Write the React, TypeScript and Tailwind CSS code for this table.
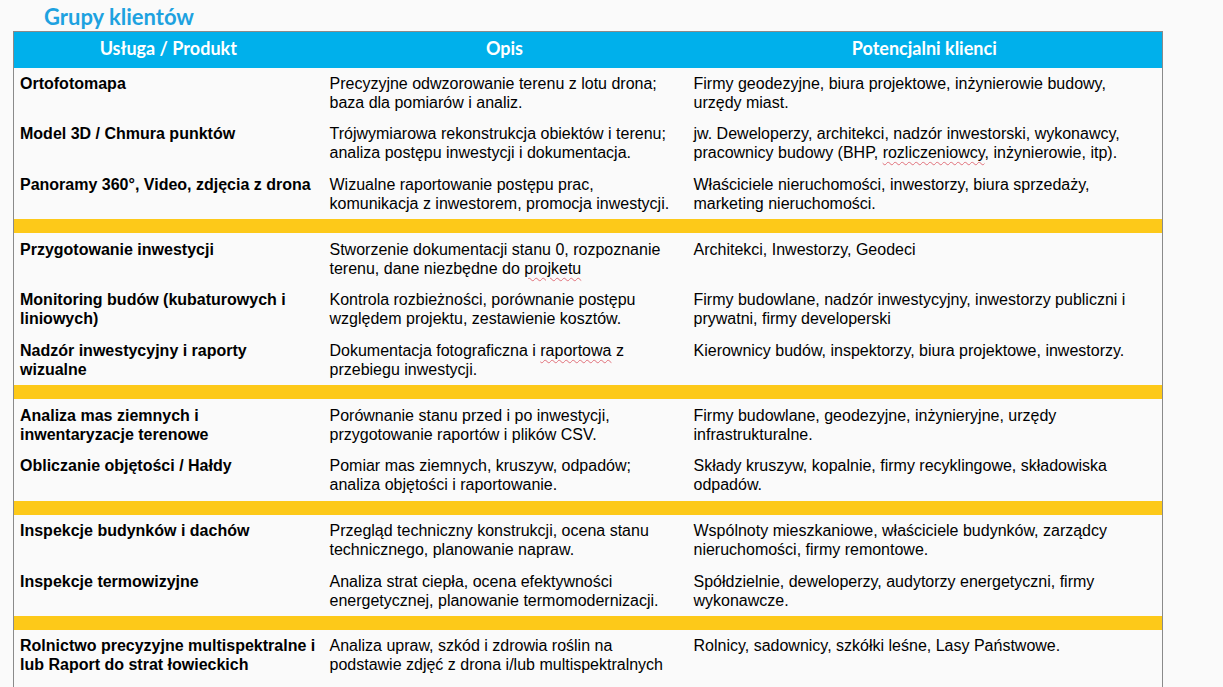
type Cell = (string | JSX.Element)[];

interface Row {
  name: string[];
  desc: Cell;
  clients: Cell;
}

const Typo = ({ children }: { children: string }) => (
  <span className="underline decoration-wavy decoration-[#e0707a] decoration-1 underline-offset-[3px]">
    {children}
  </span>
);

const groups: Row[][] = [
  [
    {
      name: ["Ortofotomapa"],
      desc: ["Precyzyjne odwzorowanie terenu z lotu drona;", "baza dla pomiarów i analiz."],
      clients: ["Firmy geodezyjne, biura projektowe, inżynierowie budowy,", "urzędy miast."],
    },
    {
      name: ["Model 3D / Chmura punktów"],
      desc: ["Trójwymiarowa rekonstrukcja obiektów i terenu;", "analiza postępu inwestycji i dokumentacja."],
      clients: [
        "jw. Deweloperzy, architekci, nadzór inwestorski, wykonawcy,",
        <>
          pracownicy budowy (BHP, <Typo>rozliczeniowcy</Typo>, inżynierowie, itp).
        </>,
      ],
    },
    {
      name: ["Panoramy 360°, Video, zdjęcia z drona"],
      desc: ["Wizualne raportowanie postępu prac,", "komunikacja z inwestorem, promocja inwestycji."],
      clients: ["Właściciele nieruchomości, inwestorzy, biura sprzedaży,", "marketing nieruchomości."],
    },
  ],
  [
    {
      name: ["Przygotowanie inwestycji"],
      desc: [
        "Stworzenie dokumentacji stanu 0, rozpoznanie",
        <>
          terenu, dane niezbędne do <Typo>projketu</Typo>
        </>,
      ],
      clients: ["Architekci, Inwestorzy, Geodeci"],
    },
    {
      name: ["Monitoring budów (kubaturowych i", "liniowych)"],
      desc: ["Kontrola rozbieżności, porównanie postępu", "względem projektu, zestawienie kosztów."],
      clients: ["Firmy budowlane, nadzór inwestycyjny, inwestorzy publiczni i", "prywatni, firmy developerski"],
    },
    {
      name: ["Nadzór inwestycyjny i raporty", "wizualne"],
      desc: [
        <>
          Dokumentacja fotograficzna i <Typo>raportowa</Typo> z
        </>,
        "przebiegu inwestycji.",
      ],
      clients: ["Kierownicy budów, inspektorzy, biura projektowe, inwestorzy."],
    },
  ],
  [
    {
      name: ["Analiza mas ziemnych i", "inwentaryzacje terenowe"],
      desc: ["Porównanie stanu przed i po inwestycji,", "przygotowanie raportów i plików CSV."],
      clients: ["Firmy budowlane, geodezyjne, inżynieryjne, urzędy", "infrastrukturalne."],
    },
    {
      name: ["Obliczanie objętości / Hałdy"],
      desc: ["Pomiar mas ziemnych, kruszyw, odpadów;", "analiza objętości i raportowanie."],
      clients: ["Składy kruszyw, kopalnie, firmy recyklingowe, składowiska", "odpadów."],
    },
  ],
  [
    {
      name: ["Inspekcje budynków i dachów"],
      desc: ["Przegląd techniczny konstrukcji, ocena stanu", "technicznego, planowanie napraw."],
      clients: ["Wspólnoty mieszkaniowe, właściciele budynków, zarządcy", "nieruchomości, firmy remontowe."],
    },
    {
      name: ["Inspekcje termowizyjne"],
      desc: ["Analiza strat ciepła, ocena efektywności", "energetycznej, planowanie termomodernizacji."],
      clients: ["Spółdzielnie, deweloperzy, audytorzy energetyczni, firmy", "wykonawcze."],
    },
  ],
  [
    {
      name: ["Rolnictwo precyzyjne multispektralne i", "lub Raport do strat łowieckich"],
      desc: ["Analiza upraw, szkód i zdrowia roślin na", "podstawie zdjęć z drona i/lub multispektralnych"],
      clients: ["Rolnicy, sadownicy, szkółki leśne, Lasy Państwowe."],
    },
  ],
];

function Lines({ lines }: { lines: Cell }) {
  return (
    <>
      {lines.map((line, i) => (
        <div key={i} className="whitespace-nowrap">
          {line}
        </div>
      ))}
    </>
  );
}

export default function App() {
  const heading = { fontFamily: "Lato, 'Open Sans', sans-serif" };

  return (
    <div
      className="min-h-screen bg-[#fafafa] pl-[13px] text-black"
      style={{ fontFamily: "'Liberation Sans', Arial, sans-serif" }}
    >
      <h2
        className="h-[31px] pl-[31px] pt-[5px] text-[22px] font-bold leading-[24px] text-[#1ea2e0]"
        style={heading}
      >
        Grupy klientów
      </h2>

      <table className="w-[1150px] table-fixed border-x border-t border-[#8a8a8a] text-[16px] leading-[19px]">
        <colgroup>
          <col className="w-[309px]" />
          <col className="w-[364px]" />
          <col />
        </colgroup>
        <thead>
          <tr className="h-[36px] bg-[#00b0eb] text-white">
            {["Usługa / Produkt", "Opis", "Potencjalni klienci"].map((h) => (
              <th key={h} className="pb-[3px] text-center text-[18px] font-bold" style={heading}>
                {h}
              </th>
            ))}
          </tr>
        </thead>
        <tbody>
          {groups.map((rows, g) => (
            <>
              {g > 0 && (
                <tr key={`sep-${g}`}>
                  <td colSpan={3} className="h-[14px] bg-[#fdc919] p-0" />
                </tr>
              )}
              {rows.map((row, r) => (
                <tr key={`${g}-${r}`} className="align-top">
                  <td
                    className={`pl-[6px] pt-[6.33px] font-bold ${
                      g === groups.length - 1 ? "pb-[20px]" : "pb-[6.33px]"
                    }`}
                  >
                    <Lines lines={row.name} />
                  </td>
                  <td className="pl-[7px] pt-[6.33px] pb-[6.33px]">
                    <Lines lines={row.desc} />
                  </td>
                  <td className="pl-[7px] pt-[6.33px] pb-[6.33px]">
                    <Lines lines={row.clients} />
                  </td>
                </tr>
              ))}
            </>
          ))}
        </tbody>
      </table>
    </div>
  );
}
